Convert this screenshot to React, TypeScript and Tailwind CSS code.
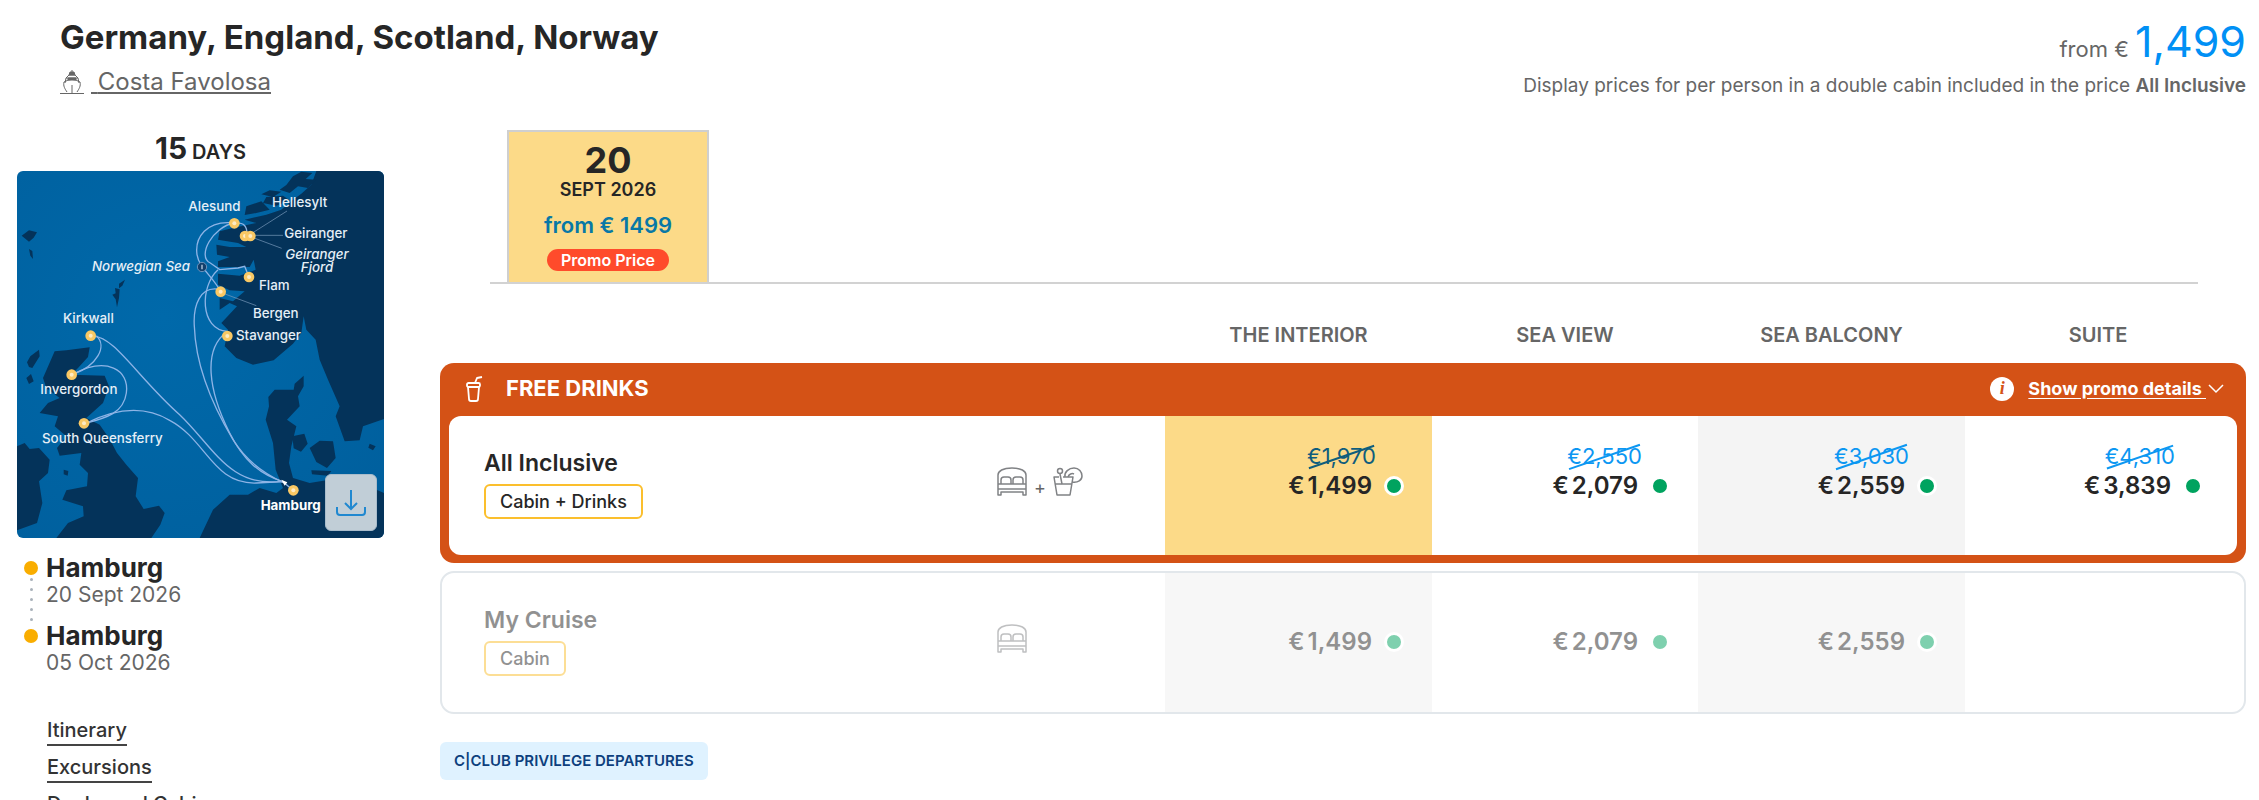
import React from "react";

type Price = { old?: string; now: string; tone: string } | null;

const COLUMNS = ["THE INTERIOR", "SEA VIEW", "SEA BALCONY", "SUITE"];

const ALL_INCLUSIVE: Price[] = [
  { old: "€1,970", now: "1,499", tone: "bg-[#fcda88] text-[#0f5d7d]" },
  { old: "€2,550", now: "2,079", tone: "text-[#0c97f2]" },
  { old: "€3,030", now: "2,559", tone: "bg-[#f4f4f4] text-[#0c97f2]" },
  { old: "€4,310", now: "3,839", tone: "text-[#0c97f2]" },
];

const MY_CRUISE: Price[] = [
  { now: "1,499", tone: "bg-[#f1f1f1]" },
  { now: "2,079", tone: "" },
  { now: "2,559", tone: "bg-[#f1f1f1]" },
  null,
];

const PORTS = [
  [704, 191],
  [736, 229],
  [752, 229],
  [748, 352],
  [663, 396],
  [683, 529],
  [273, 528],
  [216, 645],
  [253, 791],
  [881, 992],
];

const ShipIcon: React.FC = () => (
  <svg viewBox="0 0 24 24" className="h-6 w-6" fill="none" stroke="#666" strokeWidth="1">
    <path d="M12 0v3M6 8h12M9 5h6l3 3 1 5M9 5L6 8l-1 5M4 12q8-5 16 0c1 4-1 7-3 10M4 12c-1 4 1 7 3 10M12 15v8M0 23.500h24" />
    <path d="M10 2h4l1 3H9zM8 8h8v2H8z" fill="#666" />
  </svg>
);

const CupIcon: React.FC = () => (
  <svg viewBox="0 0 18 26" className="h-[26px] w-[18px]" fill="none" stroke="#fff" strokeWidth="1.800" strokeLinejoin="round">
    <rect x="1" y="7" width="13" height="4" rx="1.500" />
    <path d="M2 11l1 12c0 1 1 2 2 2h5c1 0 2-1 2-2l1-12M9 7l2-5 5-1" />
  </svg>
);

const BedIcon: React.FC = () => (
  <svg viewBox="0 0 30 30" className="h-[30px] w-[30px]" fill="none" stroke="#808285" strokeWidth="1.500" strokeLinejoin="round">
    <path d="M1 17V8c0-4 5-7 14-7s14 3 14 7v9M1 17h28v11h-3v-3H4v3H1zM1 22h28" />
    <path d="M4 17v-4c0-2 1-3 3-3h4c2 0 3 1 3 3v4M16 17v-4c0-2 1-3 3-3h4c2 0 3 1 3 3v4" />
  </svg>
);

const DrinkIcon: React.FC = () => (
  <svg viewBox="0 0 30 30" className="h-[30px] w-[30px]" fill="none" stroke="#808285" strokeWidth="1.500" strokeLinejoin="round">
    <path d="M6 10H1l3 18h13l3-18H10M2 17h17" />
    <circle cx="7" cy="4" r="2.500" />
    <path d="M7 7l2 10M12 10c-1-5 4-9 9-9 5 0 8 4 8 8s-4 7-10 6M15 10c1-3 4-4 6-3" />
  </svg>
);

const RouteMap: React.FC = () => (
  <svg
    viewBox="52 34 1101 1101"
    className="block w-full rounded-md"
    role="img"
    aria-label="Cruise route map"
    fontFamily="Inter, sans-serif"
  >
    <defs>
      <radialGradient id="sea" cx="0.400" cy="0.400" r="0.800">
        <stop offset="0" stopColor="#0069aa" />
        <stop offset="1" stopColor="#005f9d" />
      </radialGradient>
    </defs>
    <rect x="52" y="34" width="1101" height="1101" fill="url(#sea)" />
    <g fill="#04335a">
      <path d="M950 34L935 75 905 102 880 120 845 150 800 165 770 172 735 180 770 190 700 205 660 215 655 240 715 250 740 262 690 262 650 255 652 285 690 292 655 305 655 322 750 322 762 300 768 330 720 348 655 342 655 375 690 392 735 395 700 425 660 415 660 450 690 430 712 440 665 490 685 510 675 560 710 595 760 615 822 602 880 552 905 520 912 470 920 510 948 540 960 600 985 660 1020 740 1008 770 1035 845 1080 842 1090 800 1153 778V34z" />
      <path d="M880 50L905 36 938 40 918 58 950 60 925 85 895 80 870 100 840 90 860 76zM810 92L845 96 820 112 785 104zM800 112L850 108 870 122 830 138 790 130zM740 140L785 125 810 150 770 160 735 166z" />
      <path d="M912 648L885 672 882 690 825 690 806 712 808 740 798 780 820 850 828 930 850 985 830 1000 780 985 745 1005 690 1005 640 1050 600 1135H1153V1000L1060 960 980 962 930 970 880 955 868 910 875 860 890 800 862 780 900 740 895 710 912 680z" />
      <path d="M878 830l36-8 10 30-20 24-22-10zM930 865l30-22 40 2 8 50-26 30-32-18zM935 932l60 2-10 14-48-4zM1110 852l18 8-8 12-14-8z" />
      <path d="M165 575L200 572 270 563 265 592 235 625 215 645 315 648 328 680 310 730 260 775 300 795 330 838 352 880 380 915 415 955 408 1010 432 1048 478 1038 495 1060 482 1095 455 1135H170L205 1090 252 1070 250 1040 188 1020 200 992 262 980 265 940 240 915 245 880 180 888 172 865 200 830 165 800 175 770 120 760 145 730 180 715 140 685 130 655z" />
      <path d="M52 860L75 850 90 868 118 865 150 900 145 940 118 965 128 1030 112 1090 52 1112z" />
      <path d="M82 608L92 590 118 570 120 590 98 625 88 622zM80 655l14-12 8 22-14 8zM358 372l18-12-8 18-10 8zM346 385l14 4-2 26-6 28-4-24-10-14 10-4zM66 228l22-16 24 6-10 16-14 12zM88 268l10 6 2 24-8-10z" />
      <path d="M192 930l14 4-2 14-12-4z" />
    </g>
    <g fill="none" stroke="#8db4e6" strokeWidth="4">
      <path d="M704 190C620 180 585 235 592 285 598 325 640 350 663 396" />
      <path d="M704 190C640 200 590 290 632 310L660 330 715 325 735 320 748 352" />
      <path d="M704 190C735 188 742 200 742 225" />
      <path d="M663 390C600 375 580 440 584 500 588 620 640 740 700 840 740 905 800 945 850 968" />
      <path d="M655 330C600 380 600 510 683 515" />
      <path d="M680 518C610 570 625 690 690 820 730 900 780 945 850 966" />
      <path d="M280 530C340 525 420 660 540 765 640 860 690 985 845 965" />
      <path d="M290 528C325 560 290 620 222 643" />
      <path d="M222 643C320 590 390 630 380 700 372 760 320 775 258 791" />
      <path d="M258 791C360 740 440 740 510 782 620 840 640 975 770 970L850 966 878 990" />
    </g>
    <g stroke="#7f9fc0" strokeWidth="2">
      <path d="M862 154L755 222M850 227H760M846 266L755 232M770 438L668 400" />
    </g>
    <path d="M845 960l18 8-8 10z" fill="#fff" />
    {PORTS.map(([x, y]) => (
      <g key={`${x}-${y}`}>
        <circle cx={x} cy={y} r="16" fill="#f9c864" />
        <circle cx={x} cy={y} r="6" fill="#fdebc4" />
      </g>
    ))}
    <circle cx="607" cy="322" r="14" fill="#123f6b" stroke="#6d94bd" strokeWidth="3" />
    <path d="M607 315v14" stroke="#b9cde2" strokeWidth="4" />
    <g fill="#e6eff7" fontSize="40" fontWeight="500">
      <text x="566" y="154">Alesund</text>
      <text x="817" y="141">Hellesylt</text>
      <text x="854" y="234">Geiranger</text>
      <text x="277" y="333" fontStyle="italic">Norwegian Sea</text>
      <text x="952" y="298" fontStyle="italic" textAnchor="middle">Geiranger</text>
      <text x="952" y="336" fontStyle="italic" textAnchor="middle">Fjord</text>
      <text x="778" y="390">Flam</text>
      <text x="760" y="474">Bergen</text>
      <text x="709" y="542">Stavanger</text>
      <text x="190" y="490">Kirkwall</text>
      <text x="122" y="703">Invergordon</text>
      <text x="127" y="851">South Queensferry</text>
      <text x="783" y="1050" fill="#fff" fontWeight="700">Hamburg</text>
    </g>
  </svg>
);

const PriceCell: React.FC<{ price: Price }> = ({ price }) => {
  if (!price) return <td />;
  return (
    <td className={`flex flex-col items-end justify-center pb-[2px] pr-7 ${price.tone}`}>
      {price.old && (
        <span className="relative mr-7 -mt-7 text-[22px] leading-[30px]">
          {price.old}
          <span className="absolute left-0 top-1/2 h-[2px] w-full -rotate-19 bg-current" />
        </span>
      )}
      <span className="flex items-center gap-[12px] text-[24px] font-semibold leading-[30px] text-[#262626]">
        <span>
          <span className="mr-[3px]">€</span>
          {price.now}
        </span>
        <span className="h-5 w-5 rounded-full border-3 border-white bg-[#00a35f]" />
      </span>
    </td>
  );
};

const Stop: React.FC<{ port: string; date: string; dotted?: boolean }> = ({ port, date, dotted }) => (
  <li className="relative flex gap-[8px]">
    {dotted && (
      <span className="absolute left-[6px] top-[24px] flex flex-col gap-[7px]">
        {[0, 1, 2, 3, 4].map((i) => (
          <span key={i} className="h-[3px] w-[3px] rounded-full bg-[#a9b1ba]" />
        ))}
      </span>
    )}
    <span className="mt-[7px] h-[14px] w-[14px] rounded-full bg-[#f9ad00]" />
    <div>
      <p className="text-[26px] font-bold leading-[28px]">{port}</p>
      <p className="text-[21px] leading-[26px] text-[#666]">{date}</p>
    </div>
  </li>
);

const Row = "grid h-[139px] grid-cols-[716fr_267fr_266fr_267fr_266fr] overflow-hidden rounded-xl bg-white";

export default function App() {
  return (
    <div className="max-h-screen overflow-hidden bg-white font-[Inter,sans-serif] text-[#262626]">
      <header className="flex justify-between pl-[60px] pr-[13px] pt-4">
        <div>
          <h1 className="text-[33px] font-bold leading-[42px]">Germany, England, Scotland, Norway</h1>
          <div className="mt-2 flex items-center gap-[7px] leading-8">
            <ShipIcon />
            <a href="#ship" className="whitespace-pre text-[24px] text-[#666] underline underline-offset-2">
              {" "}Costa Favolosa
            </a>
          </div>
        </div>
        <div className="text-right text-[#666]">
          <p className="text-[22px] leading-[50px]">
            from € <span className="text-[43px] text-[#0090f5]">1,499</span>
          </p>
          <p className="text-[19px] leading-6">
            Display prices for per person in a double cabin included in the price <b className="font-semibold">All Inclusive</b>
          </p>
        </div>
      </header>

      <div className="mt-8 flex gap-14 pl-[17px] pr-[13px]">
        <aside className="w-[367px] shrink-0">
          <p className="text-center text-[20px] font-semibold leading-[37px]">
            <b className="text-[30px] font-bold">15</b> DAYS
          </p>
          <div className="relative">
            <RouteMap />
            <button
              type="button"
              aria-label="Download map"
              className="absolute bottom-[7px] right-[7px] flex h-[57px] w-[52px] items-center justify-center rounded-md border border-[#a9bccb] bg-[#c1ced7]"
            >
              <svg viewBox="0 0 30 26" className="h-[26px] w-[30px]" fill="none" stroke="#2088d0" strokeWidth="2">
                <path d="M15 0v18M9 13l6 6 6-6M1 17v5q0 3 3 3h22q3 0 3-3v-5" />
              </svg>
            </button>
          </div>
          <ol className="mt-[16px] flex flex-col gap-[14px] pl-[7px]">
            <Stop port="Hamburg" date="20 Sept 2026" dotted />
            <Stop port="Hamburg" date="05 Oct 2026" />
          </ol>
          <nav className="mt-10 flex flex-col items-start gap-[7px] pl-[30px] text-[20px] font-medium leading-[28px] text-[#333]">
            <a href="#itinerary" className="border-b-2 border-[#444]">Itinerary</a>
            <a href="#excursions" className="border-b-2 border-[#444]">Excursions</a>
            <a href="#decks" className="border-b-2 border-[#444]">Decks and Cabins</a>
          </nav>
        </aside>

        <main className="min-w-0 flex-1">
          <div className="ml-[50px] mr-[48px] border-b-2 border-[#d2d2d2] pl-[17px]">
            <button type="button" className="flex h-[152px] w-[202px] flex-col items-center border-2 border-b-0 border-[#cfcfcf] bg-[#fcda88] pt-[9px]">
              <b className="text-[36px] font-bold leading-[38px]">20</b>
              <span className="text-[18px] font-semibold leading-[22px]">SEPT 2026</span>
              <span className="mt-[10px] text-[22px] font-semibold leading-[28px] text-[#0878a6]">from € 1499</span>
              <span className="mt-[10px] rounded-full bg-[#ff4b2b] px-[14px] text-[16px] font-semibold leading-[22px] text-white">
                Promo Price
              </span>
            </button>
          </div>

          <table className="mt-[31px] block">
            <thead className="block px-[9px]">
              <tr className="grid grid-cols-[716fr_267fr_266fr_267fr_266fr] pr-[6px] text-[20px] font-semibold leading-[40px] text-[#666]">
                <th aria-label="Fare" />
                {COLUMNS.map((name) => (
                  <th key={name} scope="col" className="font-semibold">{name}</th>
                ))}
              </tr>
            </thead>
            <tbody className="mt-2 block rounded-[14px] bg-[#d45216] px-[9px] pb-[8px]">
              <tr className="block">
                <td className="flex h-[53px] items-center pb-[2px] pl-[17px] pr-[13px] text-white">
                  <CupIcon />
                  <span className="ml-[22px] text-[22px] font-bold">FREE DRINKS</span>
                  <button type="button" className="ml-auto flex items-center text-[18px] font-bold">
                    <span className="mr-[14px] flex h-6 w-6 items-center justify-center rounded-full bg-white font-['Liberation_Serif',serif] text-[18px] italic text-[#d45216]">
                      i
                    </span>
                    <span className="whitespace-pre underline underline-offset-3">Show promo details </span>
                    <svg viewBox="0 0 16 10" className="ml-[2px] h-[10px] w-[16px]" fill="none" stroke="#fff" strokeWidth="1.500">
                      <path d="M1 1l7 7 7-7" />
                    </svg>
                  </button>
                </td>
              </tr>
              <tr className={`${Row} pr-[6px]`}>
                <th scope="row" className="flex items-center justify-between pb-1 pl-[35px] pr-[82px] text-left font-normal">
                  <div>
                    <p className="text-[23px] font-semibold leading-[30px]">All Inclusive</p>
                    <span className="mt-[6px] inline-block rounded-md border-2 border-[#fbbf2d] px-[14px] text-[18px] font-medium leading-[31px]">
                      Cabin + Drinks
                    </span>
                  </div>
                  <span className="flex items-center gap-[7px] pb-1 text-[18px] text-[#666]">
                    <BedIcon />
                    <span className="pt-3">+</span>
                    <DrinkIcon />
                  </span>
                </th>
                {ALL_INCLUSIVE.map((price, i) => (
                  <PriceCell key={COLUMNS[i]} price={price} />
                ))}
              </tr>
            </tbody>
            <tbody className="mt-[8px] block rounded-[14px] border-2 border-[#e2e7eb] px-[7px]">
              <tr className={`${Row} pr-[6px] opacity-50`}>
                <th scope="row" className="flex items-center justify-between pb-1 pl-[35px] pr-[138px] text-left font-normal">
                  <div>
                    <p className="text-[23px] font-semibold leading-[30px]">My Cruise</p>
                    <span className="mt-[6px] inline-block rounded-md border-2 border-[#fbbf2d] px-[14px] text-[18px] font-medium leading-[31px]">
                      Cabin
                    </span>
                  </div>
                  <span className="pb-1">
                    <BedIcon />
                  </span>
                </th>
                {MY_CRUISE.map((price, i) => (
                  <PriceCell key={COLUMNS[i]} price={price} />
                ))}
              </tr>
            </tbody>
          </table>

          <span className="mt-[28px] inline-block rounded-md bg-[#dff2ff] px-[14px] text-[15px] font-semibold leading-[38px] text-[#0d3f7d]">
            C|CLUB PRIVILEGE DEPARTURES
          </span>
        </main>
      </div>
    </div>
  );
}
